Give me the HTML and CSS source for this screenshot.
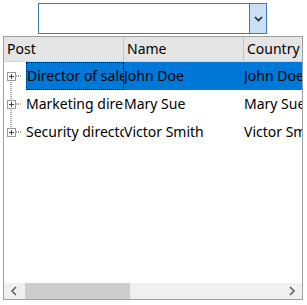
FILE: index.html
```html
<!DOCTYPE html>
<html>
  <head>
    <title>Tree Grid</title>
    <link rel="stylesheet" href="styles.css">
  </head>
  <body>
    <div class="combo">
      <div class="combo-text"></div>
      <div class="combo-btn">
        <svg width="9" height="6" viewBox="0 0 9 6"><path d="M1 1 L4.5 4.5 L8 1" fill="none" stroke="#222" stroke-width="1.6"/></svg>
      </div>
    </div>
    <div class="grid">
      <div class="head">
        <div class="hcell">Post</div>
        <div class="hcell">Name</div>
        <div class="hcell">Country</div>
      </div>
      <div class="row selected">
        <div class="tree">
          <svg width="22" height="28" viewBox="0 0 22 28"><path d="M7 14 V28" stroke="#555" stroke-dasharray="1 1"/><path d="M12 14 H18" stroke="#555" stroke-dasharray="1 1"/><rect x="3.5" y="10.5" width="8" height="8" fill="#fff" stroke="#999"/><path d="M5 14.5 H10 M7.5 12 V17" stroke="#444"/></svg>
        </div>
        <div class="cell first"><span class="focus">Director of sales</span></div>
        <div class="cell">John Doe</div>
        <div class="cell">John Doe</div>
      </div>
      <div class="row">
        <div class="tree">
          <svg width="22" height="28" viewBox="0 0 22 28"><path d="M7 0 V28" stroke="#555" stroke-dasharray="1 1"/><path d="M12 14 H18" stroke="#555" stroke-dasharray="1 1"/><rect x="3.5" y="10.5" width="8" height="8" fill="#fff" stroke="#999"/><path d="M5 14.5 H10 M7.5 12 V17" stroke="#444"/></svg>
        </div>
        <div class="cell first">Marketing director</div>
        <div class="cell">Mary Sue</div>
        <div class="cell">Mary Sue</div>
      </div>
      <div class="row">
        <div class="tree">
          <svg width="22" height="28" viewBox="0 0 22 28"><path d="M7 0 V14" stroke="#555" stroke-dasharray="1 1"/><path d="M12 14 H18" stroke="#555" stroke-dasharray="1 1"/><rect x="3.5" y="10.5" width="8" height="8" fill="#fff" stroke="#999"/><path d="M5 14.5 H10 M7.5 12 V17" stroke="#444"/></svg>
        </div>
        <div class="cell first">Security director</div>
        <div class="cell">Victor Smith</div>
        <div class="cell">Victor Smith</div>
      </div>
      <div class="fill"></div>
      <div class="hscroll">
        <div class="arrow">
          <svg width="10" height="10" viewBox="0 0 10 10"><path d="M7 1 L3 5 L7 9" fill="none" stroke="#606060" stroke-width="1.6"/></svg>
        </div>
        <div class="track"><div class="thumb"></div></div>
        <div class="arrow">
          <svg width="10" height="10" viewBox="0 0 10 10"><path d="M3 1 L7 5 L3 9" fill="none" stroke="#606060" stroke-width="1.6"/></svg>
        </div>
      </div>
    </div>
  </body>
</html>
```

FILE: styles.css
```css
body{
    margin: 0;
    padding: 3px 0 0 0;
    font-family: "Noto Sans", sans-serif;
    font-size: 14px;
    color: #000;
    background: #fff;
}
.combo{
    display: flex;
    width: 229px;
    height: 31px;
    margin-left: 38px;
    box-sizing: border-box;
    border: 1px solid #3c78b8;
    background: #fff;
}
.combo-text{
    flex: 1;
}
.combo-btn{
    width: 16px;
    background: #c9dff5;
    border-left: 1px solid #3c78b8;
    display: flex;
    align-items: center;
    justify-content: center;
}
.grid{
    margin: 2px 0 0 3px;
    width: 300px;
    height: 264px;
    box-sizing: border-box;
    border: 1px solid #a0a0a0;
    display: flex;
    flex-direction: column;
    overflow: hidden;
}
.head{
    display: flex;
    height: 24px;
    background: #e5e5e5;
    border-bottom: 1px solid #d5d5d5;
    flex: none;
}
.hcell{
    width: 120px;
    flex: none;
    box-sizing: border-box;
    padding-left: 3px;
    border-right: 1px solid #c4c4c4;
    line-height: 24px;
    white-space: nowrap;
    overflow: hidden;
}
.row{
    display: flex;
    height: 28px;
    flex: none;
}
.tree{
    width: 22px;
    flex: none;
    height: 28px;
    background: #fff;
}
.tree svg{
    display: block;
}
.cell{
    width: 120px;
    flex: none;
    line-height: 28px;
    white-space: nowrap;
    overflow: hidden;
}
.cell.first{
    width: 98px;
}
.selected .cell{
    background: #0078d7;
}
.focus{
    display: block;
    box-sizing: border-box;
    height: 28px;
    line-height: 26px;
    border: 1px dotted #000;
    padding-left: 0;
}
.fill{
    flex: 1;
}
.hscroll{
    display: flex;
    height: 16px;
    background: #f0f0f0;
    flex: none;
}
.arrow{
    width: 20px;
    display: flex;
    align-items: center;
    justify-content: center;
}
.track{
    flex: 1;
    display: flex;
    padding-left: 1px;
}
.thumb{
    width: 105px;
    background: #cdcdcd;
}
```
